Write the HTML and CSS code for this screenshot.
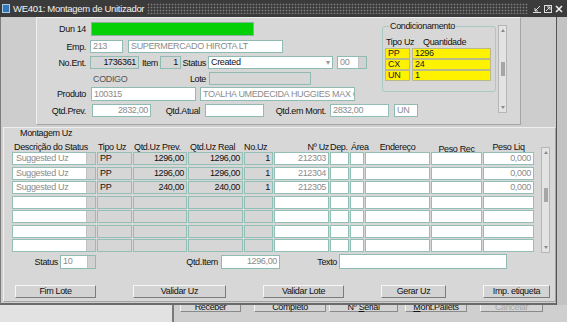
FILE: index.html
```html
<!DOCTYPE html>
<html lang="pt">
<head>
  <meta charset="UTF-8">
  <title>WE401: Montagem de Unitizador</title>
  <link rel="stylesheet" href="styles.css">
</head>
<body>
  <div class="win">
    <!-- Title bar -->
    <div class="titlebar">
      <span class="ticon"></span>
      <span class="ttext">WE401: Montagem de Unitizador</span>
      <span class="tdots"></span>
      <span class="tbtns">
        <svg width="8" height="8" viewBox="0 0 8 8"><path d="M7 1L2 6M2 3v3h3M0 7.5h8" stroke="#ddd" fill="none"/></svg>
        <svg width="8" height="8" viewBox="0 0 8 8"><rect x="0.5" y="0.5" width="7" height="7" stroke="#ddd" fill="none"/><path d="M2 6L6 2M3 2h3v3" stroke="#ddd" fill="none"/></svg>
        <svg width="8" height="8" viewBox="0 0 8 8"><path d="M1 1L7 7M7 1L1 7" stroke="#eee" stroke-width="1.6"/></svg>
      </span>
    </div>

    <div class="wbody">
      <div class="wmain">
        <!-- Header panel -->
        <div class="top-panel">
          <div class="tp-main">
            <div class="tp-upper">
              <div class="fields">
                <div class="row r-dun">
                  <span class="lbl">Dun 14</span>
                  <span class="f dun"></span>
                </div>
                <div class="row r-emp">
                  <span class="lbl">Emp.</span>
                  <span class="f w33">213</span>
                  <span class="f w155 ml5">SUPERMERCADO HIROTA LT</span>
                </div>
                <div class="row r-ent">
                  <span class="lbl">No.Ent.</span>
                  <span class="f dis r w49">1736361</span>
                  <span class="il w21">Item</span>
                  <span class="f dis r w21">1</span>
                  <span class="il w27">Status</span>
                  <span class="f blk combo">Created<span class="arrow">&#9662;</span></span>
                  <span class="f lst"><span class="lst-t">00</span><span class="strip"></span></span>
                </div>
                <div class="row r-lote">
                  <span class="codigo">CODIGO</span>
                  <span class="il w60">Lote</span>
                  <span class="f dis w102"></span>
                </div>
                <div class="row r-prod">
                  <span class="lbl">Produto</span>
                  <span class="f w105">100315</span>
                  <span class="f w155 ml4">TOALHA UMEDECIDA HUGGIES MAX CL</span>
                </div>
              </div>

              <fieldset class="cond">
                <legend>Condicionamento</legend>
                <div class="cond-head"><span class="ch1">Tipo Uz</span><span>Quantidade</span></div>
                <div class="cond-row"><span class="y y1">PP</span><span class="y y2">1296</span></div>
                <div class="cond-row"><span class="y y1">CX</span><span class="y y2">24</span></div>
                <div class="cond-row"><span class="y y1">UN</span><span class="y y2">1</span></div>
              </fieldset>
            </div>

            <div class="row r-qtd">
              <span class="lbl">Qtd.Prev.</span>
              <span class="f r w59 ml2">2832,00</span>
              <span class="il w54">Qtd.Atual</span>
              <span class="f w59"></span>
              <span class="il w66">Qtd.em Mont.</span>
              <span class="f w59 c">2832,00</span>
              <span class="f w24 ml5">UN</span>
            </div>
          </div>
          <div class="vscroll vs-top">
            <span class="up"></span><span class="grip"></span><span class="down"></span>
          </div>
        </div>

        <!-- Montagem Uz panel -->
        <div class="mont-panel">
          <div class="mtitle">Montagem Uz</div>
          <div class="mbody">
            <div class="mgrid">
              <div class="gh cols">
                <span class="h-desc">Descrição do Status</span>
                <span class="h-l1">Tipo Uz</span>
                <span class="h-l1">Qtd.Uz Prev.</span>
                <span class="h-l2">Qtd.Uz Real</span>
                <span>No.Uz</span>
                <span class="h-r">Nº Uz</span>
                <span>Dep.</span>
                <span class="h-l1">Área</span>
                <span class="h-c">Endereço</span>
                <span class="h-c lo">Peso Rec</span>
                <span class="h-c">Peso Liq</span>
              </div>
              <div class="rows" id="rows"></div>
            </div>
            <div class="vscroll vs-grid">
              <span class="up"></span><span class="grip"></span><span class="down"></span>
            </div>
          </div>

          <div class="mfoot">
            <span class="il w56">Status</span>
            <span class="f lst w36"><span class="lst-t">10</span><span class="strip"></span></span>
            <span class="il w125">Qtd.Item</span>
            <span class="f r w59 h14">1296,00</span>
            <span class="il w59">Texto</span>
            <span class="f w168 h15"></span>
          </div>

          <div class="btns">
            <span class="btn w81">Fim Lote</span>
            <span class="btn w93">Validar Uz</span>
            <span class="btn w81">Validar Lote</span>
            <span class="btn w65">Gerar Uz</span>
            <span class="btn w67">Imp. etiqueta</span>
          </div>
        </div>
      </div>
      <div class="wside"></div>
    </div>
  </div>

  <!-- Parent window behind -->
  <div class="backbar">
    <div class="backwin">
      <span class="bbtn b1">Receber</span>
      <span class="bbtn b2">Completo</span>
      <span class="bbtn b3">Nº <u>S</u>erial</span>
      <span class="bbtn b4"><u>M</u>ont.Pallets</span>
      <span class="bbtn b5 off">Cancelar</span>
    </div>
  </div>

  <script>
    // table rows: 3 suggested Uz + 4 empty lines
    const uz=[
      {tipo:'PP',prev:'1296,00',real:'1296,00',no:'1',num:'212303',liq:'0,000'},
      {tipo:'PP',prev:'1296,00',real:'1296,00',no:'1',num:'212304',liq:'0,000'},
      {tipo:'PP',prev:'240,00',real:'240,00',no:'1',num:'212305',liq:'0,000'}
    ];
    const rows=document.getElementById('rows');
    for(let i=0;i<7;i++){
      const d=uz[i]||{};
      const r=document.createElement('div');
      r.className='cols grow';
      r.innerHTML=
        `<span class="c desc"><span class="lst-t">${d.tipo?'Suggested Uz':''}</span><span class="strip"></span></span>`+
        `<span class="c g">${d.tipo||''}</span>`+
        `<span class="c g r">${d.prev||''}</span>`+
        `<span class="c g r">${d.real||''}</span>`+
        `<span class="c g r">${d.no||''}</span>`+
        `<span class="c t r">${d.num||''}</span>`+
        `<span class="c"></span><span class="c"></span><span class="c"></span><span class="c"></span>`+
        `<span class="c t r">${d.liq||''}</span>`;
      rows.appendChild(r);
    }
  </script>
</body>
</html>
```

FILE: styles.css
```css
/* ====== Base ====== */
*{box-sizing:border-box}
body{margin:0;width:567px;height:322px;overflow:hidden;background:#e2e2e2;font-family:"Liberation Sans",Arial,sans-serif;font-size:9px;letter-spacing:-.35px;color:#111}

/* ====== Window frame ====== */
.win{position:relative;z-index:1;background:#cdcdcd}
.titlebar{height:17px;background:#3b3b3b;display:flex;align-items:center;color:#f2f2f2}
.ticon{width:8px;height:9px;margin:0 3px 0 2px;background:#3576b6;border:1px solid #a6cbe8}
.ttext{white-space:nowrap;padding-right:3px;font-size:9.5px;letter-spacing:-.3px}
.tdots{flex:1;height:11px;background-image:radial-gradient(circle,#7c7c7c .8px,transparent 1.1px);background-size:3px 3px}
.tbtns{display:flex;gap:3px;padding:0 4px 0 5px}
.wbody{display:flex;height:288px}
.wmain{width:556px;height:288px;border-left:1px solid #7c7c7c;padding-left:2px;padding-bottom:1px;border-bottom:2px solid #6a6a6a;display:flex;flex-direction:column}
.wside{flex:1;background:#c3c3c3;border-left:1px solid #545454}

/* ====== Fields ====== */
.row{display:flex;align-items:center;height:13px}
.lbl{width:53px;padding-right:4px;text-align:right;white-space:nowrap}
.il{text-align:right;padding-right:2px;white-space:nowrap}
.f{display:block;height:13px;border:1px solid #8fbbb3;background:#fff;padding:0 2px;line-height:11px;white-space:nowrap;overflow:hidden;color:#8c8c8c}
.f.dis{background:#d6d6d6;color:#111}
.f.blk{color:#111}
.r{text-align:right}
.c{text-align:center}
.f.dun{width:163px;height:14px;margin-left:1px;background:#05cf05;border-color:#8ab0a0}
.combo{width:125px;display:flex;justify-content:space-between}
.arrow{color:#9a9a9a;font-size:8px}
.lst{display:flex;padding:0;width:30px;margin-left:4px}
.lst-t{flex:1;padding-left:2px;overflow:hidden}
.strip{width:8px;background:#d2d2d2;border-left:1px solid #c2c2c2}
.codigo{width:56px;margin-left:56px;color:#555}
.w21{width:21px}.w24{width:24px}.w27{width:27px}.w33{width:33px}.w36{width:36px}.w49{width:49px}
.w54{width:54px;padding-right:5px}.w56{width:56px}.w59{width:59px}.w60{width:60px;padding-right:3px}.w66{width:66px;padding-right:4px}
.w102{width:102px}.w105{width:105px}.w125{width:125px;padding-right:3px}.w155{width:155px}.w168{width:168px}
.ml2{margin-left:2px}.ml4{margin-left:4px}.ml5{margin-left:5px}
.h14{height:14px}.h15{height:15px}

/* ====== Header panel ====== */
.top-panel{margin-left:33px;width:485px;height:108px;background:#d7d7d7;border:1px solid;border-color:#efefef #a4a4a4 #a4a4a4 #efefef;display:flex}
.tp-main{width:460px;display:flex;flex-direction:column}
.tp-upper{display:flex}
.fields{width:345px}
.r-dun{height:14px;margin-top:4px}
.r-emp{margin-top:4px}
.r-ent{margin-top:3px}
.r-lote{margin-top:3px}
.r-prod{height:14px;margin-top:2px}
.r-prod .f{height:14px;line-height:12px}
.r-prod .w105{margin-left:1px}
.r-qtd{margin-top:3px}

.cond{margin:3px 0 0;padding:0 0 0 2px;width:114px;height:71px;border:1px solid #a9cac4;border-radius:3px;min-width:0}
.cond legend{padding:0 1px;margin-left:4px;line-height:10px}
.cond-head{display:flex;height:10px;line-height:10px;margin-top:6px;margin-bottom:1px}
.ch1{width:38px;padding-left:1px}
.cond-row{display:flex;gap:2px;height:11px}
.y{height:11px;background:#fff200;border:1px solid #b9b98a;line-height:9px;padding:0 2px;color:#222}
.y1{width:25px}.y2{width:79px}

/* ====== Scrollbars ====== */
.vscroll{width:9px;background:#e3e3e3;border:1px solid #b6b6b6;display:flex;flex-direction:column;align-items:center;justify-content:space-between;padding:3px 0}
.vs-top{margin:7px 0 0 1px;height:88px}
.vs-grid{margin:5px 0 0 7px;height:106px;justify-content:flex-start}
.up,.down{width:0;height:0;border-left:2px solid transparent;border-right:2px solid transparent}
.up{border-bottom:3px solid #8a8a8a}
.down{border-top:3px solid #8a8a8a}
.grip{width:4px;height:14px;background-image:radial-gradient(circle,#a5a5a5 .7px,transparent 1px);background-size:2px 2px}
.vs-grid .grip{margin-top:34px}
.vs-grid .down{margin-top:auto}

/* ====== Montagem Uz panel ====== */
.mont-panel{margin-top:2px;width:553px;height:175px;background:#d7d7d7;border:1px solid;border-color:#efefef #a4a4a4 #a4a4a4 #efefef}
.mtitle{margin-left:16px;height:10px;line-height:10px}
.mbody{display:flex;margin-top:4px}
.mgrid{margin-left:8px}
.cols{display:grid;grid-template-columns:84px 35px 54px 55px 29px 55px 19px 14px 65px 51px 51px;column-gap:1px}
.gh{height:10px;line-height:10px;white-space:nowrap}
.h-desc{padding-left:2px}
.h-l1{padding-left:1px}
.h-l2{padding-left:2px}
.h-r{text-align:right}
.h-c{text-align:center}
.lo{position:relative;top:2px}
.rows{display:flex;flex-direction:column;gap:1.5px}
.grow span.c{height:13px}
.c{display:block;height:13px;border:1px solid #93bfb7;background:#fff;padding:0 2px;line-height:11px;white-space:nowrap;overflow:hidden;text-align:left}
.c.g{background:#d6d6d6;color:#111}
.c.t{color:#8c8c8c}
.c.r{text-align:right}
.c.desc{display:flex;padding:0;color:#8c8c8c}
.desc .lst-t{padding-left:3px}
.desc .strip{width:9px}

.mfoot{display:flex;align-items:center;height:15px;margin-top:1px}
.mfoot .lst{margin-left:0;height:14px}

.btns{display:flex;justify-content:space-between;padding:0 5px 0 11px;margin-top:16px}
.btn{height:13px;background:#d3d3d3;border:1px solid;border-color:#f6f6f6 #7c7c7c #7c7c7c #f6f6f6;text-align:center;line-height:11px;white-space:nowrap}
.w81{width:81px}.w93{width:93px}.w65{width:65px}.w67{width:67px}

/* ====== Parent window (behind) ====== */
.backbar{display:flex;height:27px;margin-top:-5px}
.backwin{margin-left:172px;flex:1;background:#cfcfcf;border-left:2px solid #7a7a7a;display:flex;align-items:flex-start}
.bbtn{height:12px;line-height:12px;text-align:center;background:#d4d4d4;border:1px solid;border-color:#f4f4f4 #8a8a8a #8a8a8a #f4f4f4;white-space:nowrap}
.b1{width:61px;margin-left:6px}
.b2{width:72px;margin-left:13px}
.b3{width:69px;margin-left:3px}
.b4{width:62px;margin-left:7px}
.b5{width:63px;margin-left:13px}
.off{color:#a8a8a8}
```
